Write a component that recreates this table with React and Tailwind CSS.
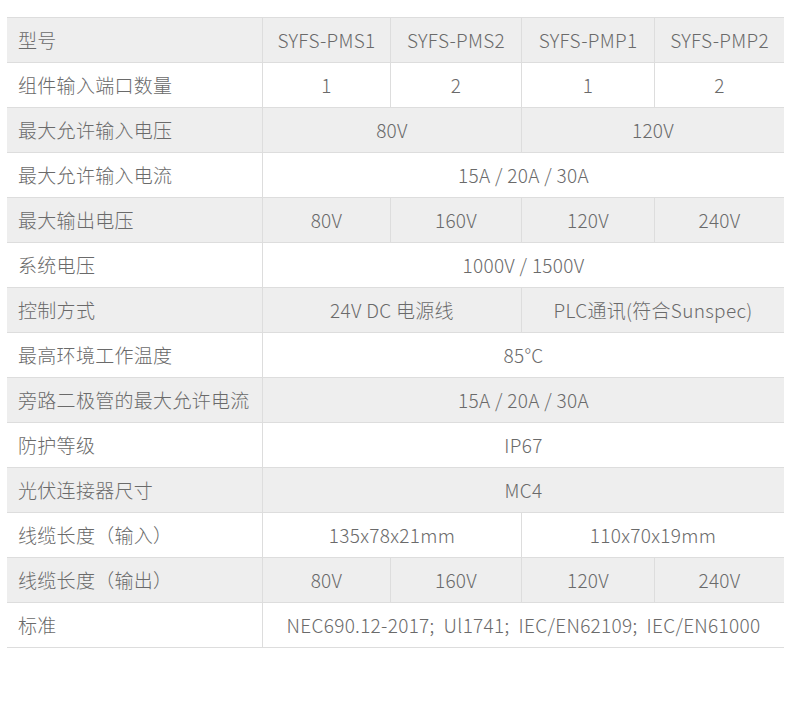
import React from "react";

const spans = {
  1: "col-span-1",
  2: "col-span-2",
  4: "col-span-4",
};

const rows = [
  ["型号", [["SYFS-PMS1", 1], ["SYFS-PMS2", 1], ["SYFS-PMP1", 1], ["SYFS-PMP2", 1]]],
  ["组件输入端口数量", [["1", 1], ["2", 1], ["1", 1], ["2", 1]]],
  ["最大允许输入电压", [["80V", 2], ["120V", 2]]],
  ["最大允许输入电流", [["15A / 20A / 30A", 4]]],
  ["最大输出电压", [["80V", 1], ["160V", 1], ["120V", 1], ["240V", 1]]],
  ["系统电压", [["1000V / 1500V", 4]]],
  ["控制方式", [["24V DC 电源线", 2], ["PLC通讯(符合Sunspec)", 2]]],
  ["最高环境工作温度", [["85°C", 4]]],
  ["旁路二极管的最大允许电流", [["15A / 20A / 30A", 4]]],
  ["防护等级", [["IP67", 4]]],
  ["光伏连接器尺寸", [["MC4", 4]]],
  ["线缆长度（输入）", [["135x78x21mm", 2], ["110x70x19mm", 2]]],
  ["线缆长度（输出）", [["80V", 1], ["160V", 1], ["120V", 1], ["240V", 1]]],
  ["标准", [["NEC690.12-2017;  Ul1741;  IEC/EN62109;  IEC/EN61000", 4]]],
];

export default function App() {
  return (
    <div
      className="min-h-screen w-[790px] bg-white pt-[17px] text-[#6a6a6a] font-light"
      style={{ fontFamily: '"Noto Sans CJK SC", "Noto Sans", sans-serif' }}
    >
      <div className="ml-[7px] w-[777px] border-b border-[#dddddd]">
        {rows.map(([label, cells], i) => (
          <div
            key={i}
            className={
              "grid h-[45px] grid-cols-[255px_128px_131px_133px_130px] border-t border-[#dddddd] text-[19px] tracking-[0.3px] " +
              (i % 2 === 0 ? "bg-[#eeeeee]" : "bg-white")
            }
          >
            <div className="flex items-center pl-[11px] whitespace-nowrap">{label}</div>
            {cells.map(([text, span], j) => (
              <div
                key={j}
                className={
                  "flex items-center justify-center whitespace-pre border-l border-[#dddddd] " + spans[span]
                }
              >
                {text}
              </div>
            ))}
          </div>
        ))}
      </div>
    </div>
  );
}
